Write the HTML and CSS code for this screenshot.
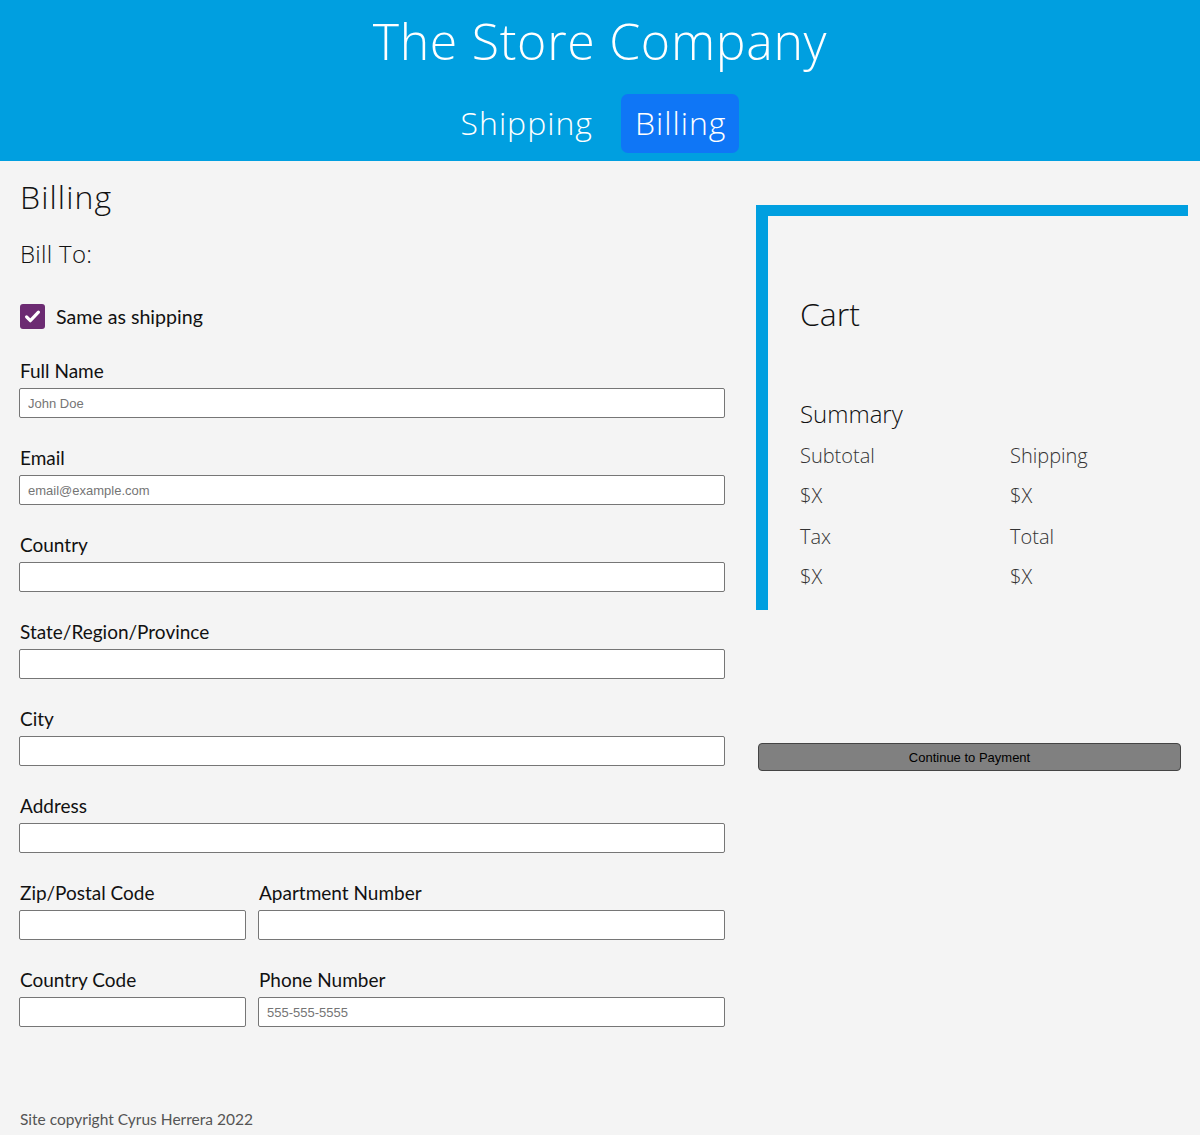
FILE: index.html
```html
<!DOCTYPE html>
<html lang="en">
<head>
<meta charset="utf-8">
<title>Billing - The Store Company</title>
<link rel="stylesheet" href="styles.css">
</head>
<body>
<header class="site-header">
  <h1 class="site-title">The Store Company</h1>
  <nav class="site-nav">
    <a class="nav-link" href="#">Shipping</a>
    <a class="nav-link active" href="#">Billing</a>
  </nav>
</header>
<main class="page">
  <section class="form-col">
    <h2 class="page-title">Billing</h2>
    <h3 class="sub-title">Bill To:</h3>
    <label class="check-row">
      <span class="check-box"><svg viewBox="0 0 24 24" width="19" height="19"><path d="M4.5 12.5l4.8 4.8L19.5 6.5" fill="none" stroke="#fff" stroke-width="4" stroke-linecap="round" stroke-linejoin="round"/></svg></span>
      <span>Same as shipping</span>
    </label>
    <div class="field">
      <label class="field-label">Full Name</label>
      <input class="field-input" type="text" placeholder="John Doe">
    </div>
    <div class="field">
      <label class="field-label">Email</label>
      <input class="field-input" type="text" placeholder="email@example.com">
    </div>
    <div class="field">
      <label class="field-label">Country</label>
      <input class="field-input" type="text">
    </div>
    <div class="field">
      <label class="field-label">State/Region/Province</label>
      <input class="field-input" type="text">
    </div>
    <div class="field">
      <label class="field-label">City</label>
      <input class="field-input" type="text">
    </div>
    <div class="field">
      <label class="field-label">Address</label>
      <input class="field-input" type="text">
    </div>
    <div class="field-row">
      <div class="field small">
        <label class="field-label">Zip/Postal Code</label>
        <input class="field-input" type="text">
      </div>
      <div class="field wide">
        <label class="field-label">Apartment Number</label>
        <input class="field-input" type="text">
      </div>
    </div>
    <div class="field-row">
      <div class="field small">
        <label class="field-label">Country Code</label>
        <input class="field-input" type="text">
      </div>
      <div class="field wide">
        <label class="field-label">Phone Number</label>
        <input class="field-input" type="text" placeholder="555-555-5555">
      </div>
    </div>
    <footer class="site-footer">Site copyright Cyrus Herrera 2022</footer>
  </section>
  <aside class="side-col">
    <div class="cart">
      <h2 class="cart-title">Cart</h2>
      <h3 class="summary-title">Summary</h3>
      <div class="summary-grid">
        <span>Subtotal</span><span>Shipping</span>
        <span>$X</span><span>$X</span>
        <span>Tax</span><span>Total</span>
        <span>$X</span><span>$X</span>
      </div>
    </div>
    <button class="pay-btn" type="button">Continue to Payment</button>
  </aside>
</main>
</body>
</html>
```
FILE: styles.css
```css
* { box-sizing: border-box; }
html, body { margin: 0; padding: 0; }
body {
  background: #f4f4f4;
  color: #111;
  font-family: "Lato", "Open Sans", sans-serif;
}
.site-header {
  background: #009fe0;
  height: 161px;
  padding-top: 10px;
  text-align: center;
  color: #fff;
}
.site-title {
  margin: 0;
  font-family: "Open Sans", sans-serif;
  font-weight: 300;
  font-size: 50px;
  line-height: 62px;
  letter-spacing: 0.7px;
}
.site-nav {
  margin-top: 22px;
  display: flex;
  justify-content: center;
  align-items: center;
  gap: 28px;
}
.nav-link {
  color: #fff;
  text-decoration: none;
  font-family: "Open Sans", sans-serif;
  font-weight: 300;
  font-size: 32px;
  letter-spacing: 1px;
  line-height: 57px;
  height: 59px;
}
.nav-link.active {
  background: #0f76f6;
  border-radius: 7px;
  padding: 0 13px 0 14px;
}
.page {
  display: flex;
  align-items: flex-start;
}
.form-col {
  width: 756px;
  padding-left: 19px;
  padding-right: 31px;
}
.page-title {
  margin: 16px 0 0 1px;
  font-family: "Open Sans", sans-serif;
  font-weight: 300;
  font-size: 32px;
  line-height: 40px;
  letter-spacing: 1.1px;
}
.sub-title {
  margin: 22px 0 0 1px;
  font-family: "Open Sans", sans-serif;
  font-weight: 300;
  font-size: 24px;
  line-height: 30px;
  letter-spacing: 0.3px;
}
.check-row {
  margin: 35px 0 0 1px;
  display: flex;
  align-items: center;
  gap: 11px;
  font-size: 19.6px;
  height: 25px;
}
.check-box {
  width: 25px;
  height: 25px;
  border-radius: 3px;
  background: #6c2b72;
  display: flex;
  align-items: center;
  justify-content: center;
}
.field { margin-top: 28px; }
.check-row + .field { margin-top: 30px; }
.field-label {
  display: block;
  font-size: 19px;
  line-height: 24px;
  margin-left: 1px;
  margin-bottom: 5px;
}
.field-input {
  display: block;
  width: 100%;
  height: 30px;
  border: 1px solid #767676;
  border-radius: 2px;
  background: #fff;
  padding: 0 8px;
  font-family: "Liberation Sans", Arial, sans-serif;
  font-size: 13px;
}
.field-input::placeholder { color: #757575; }
.field-row {
  display: flex;
  gap: 12px;
}
.field-row .small { width: 227px; }
.field-row .wide { flex: 1; }
.site-footer {
  margin-top: 80px;
  margin-left: 1px;
  font-size: 15.5px;
  line-height: 24px;
  color: #555;
  padding-bottom: 3px;
}
.side-col {
  width: 432px;
  padding-top: 44px;
}
.cart {
  border-top: 11px solid #009fe0;
  border-left: 12px solid #009fe0;
  height: 405px;
  padding: 78px 0 0 32px;
}
.cart-title {
  margin: 0;
  font-family: "Open Sans", sans-serif;
  font-weight: 300;
  font-size: 32px;
  line-height: 40px;
}
.summary-title {
  margin: 65px 0 0;
  font-family: "Open Sans", sans-serif;
  font-weight: 300;
  font-size: 24px;
  line-height: 30px;
}
.summary-grid {
  display: grid;
  grid-template-columns: 210px 210px;
  grid-auto-rows: 40.5px;
  align-items: center;
  font-family: "Open Sans", sans-serif;
  font-weight: 300;
  font-size: 20px;
  color: #333;
  margin-top: 6px;
}
.pay-btn {
  display: block;
  margin: 133px 0 0 2px;
  width: 423px;
  height: 28px;
  background: #808080;
  border: 1px solid #444;
  border-radius: 4px;
  font-family: "Liberation Sans", Arial, sans-serif;
  font-size: 13px;
  color: #000;
}
```
